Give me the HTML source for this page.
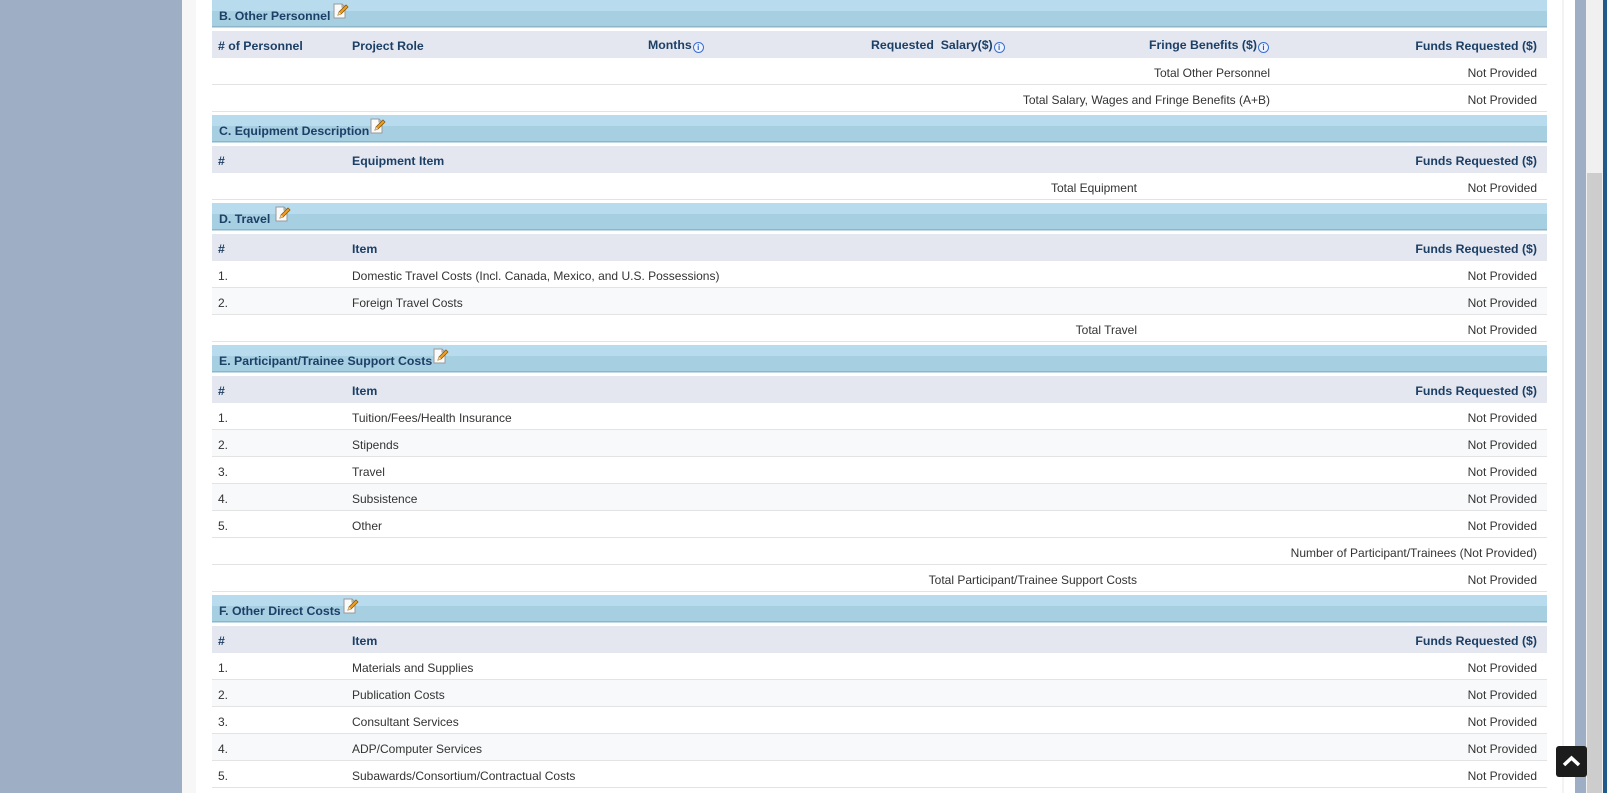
<!DOCTYPE html>
<html><head><meta charset="utf-8"><style>
*{margin:0;padding:0;box-sizing:border-box}
body{width:1607px;height:793px;overflow:hidden;background:#fff;font-family:"Liberation Sans",Arial,sans-serif;font-size:12px;color:#333;position:relative}
#lb{position:absolute;left:0;top:0;width:182px;height:793px;background:#9eaec4}
#lb2{position:absolute;left:182px;top:0;width:14px;height:793px;background:#f7f7f7}
#rl{position:absolute;left:1562px;top:0;width:2px;height:793px;background:#f3f3f3}
#rb{position:absolute;left:1575px;top:0;width:11px;height:793px;background:#9eaec4}
#sb{position:absolute;left:1586px;top:0;width:17px;height:793px;background:#f0f0f0}
#th{position:absolute;left:1587px;top:173px;width:15px;height:620px;background:#cdcdcd}
#dk{position:absolute;left:1603px;top:0;width:4px;height:793px;background:#1f5a8a}
#main{position:absolute;left:212px;top:0;width:1335px}
.sec{margin-bottom:3px}
.hd{height:28px;background:linear-gradient(#b8dcee 0,#b8dcee 11px,#a7cfe2 11px,#a7cfe2 26px,#8db5c8 26px,#8db5c8 27px,#c4dbe6 27px);position:relative;font-weight:bold;font-size:12.3px;color:#1c3f66;padding:9px 0 0 7px}
.hd svg{position:absolute;top:3px}
.ch{height:27px;margin-top:3px;background:#e4e7f0;position:relative;font-weight:bold;font-size:12.3px;color:#1c3f66}
.r{height:27px;position:relative;border-bottom:1px solid #e3e3e3}
.r.a{background:#f8f9fa}
.c{position:absolute;top:8px;white-space:nowrap}
.rt{text-align:right}
.info{display:inline-block;width:11px;height:11px;border:1px solid #3a6fd0;border-radius:50%;font-size:8px;line-height:9px;text-align:center;color:#2a5fc0;font-weight:bold;vertical-align:-1px;margin-left:1px;background:#eef3ff}
#up{position:absolute;left:1556px;top:746px;width:31px;height:31px;background:#1c1c1c;border-radius:3px}
</style></head><body>
<div id="lb"></div><div id="lb2"></div><div id="rl"></div><div id="rb"></div><div id="sb"></div><div id="th"></div><div id="dk"></div>
<svg width="0" height="0" style="position:absolute"><defs><g id="ed"><path d="M2 1h8l3 3v11H2z" fill="#fafafa" stroke="#999"/><path d="M10 1v3h3" fill="none" stroke="#999"/><path d="M6 12l1-3 7-7 2 2-7 7z" fill="#f0a020" stroke="#8a5a10" stroke-width=".8"/><path d="M6 12l1-3 2 2z" fill="#f3d9a0"/></g></defs></svg>
<div id="main">
<div class="sec"><div class="hd">B. Other Personnel<svg width="17" height="17" style="left:120px"><use href="#ed"/></svg></div>
<div class="ch"><span class="c" style="left:6px">#&nbsp;of Personnel</span><span class="c" style="left:140px">Project Role</span><span class="c" style="left:436px;top:7px">Months<span class="info">i</span></span><span class="c" style="left:659px;top:7px">Requested&nbsp; Salary($)<span class="info">i</span></span><span class="c" style="left:937px;top:7px">Fringe Benefits ($)<span class="info">i</span></span><span class="c rt" style="right:10px">Funds Requested ($)</span></div>
<div class="r"><span class="c rt" style="right:277px">Total Other Personnel</span><span class="c rt" style="right:10px">Not Provided</span></div>
<div class="r"><span class="c rt" style="right:277px">Total Salary, Wages and Fringe Benefits (A+B)</span><span class="c rt" style="right:10px">Not Provided</span></div></div>

<div class="sec"><div class="hd">C. Equipment Description<svg width="17" height="17" style="left:157px"><use href="#ed"/></svg></div>
<div class="ch"><span class="c" style="left:6px">#</span><span class="c" style="left:140px">Equipment Item</span><span class="c rt" style="right:10px">Funds Requested ($)</span></div>
<div class="r"><span class="c rt" style="right:410px">Total Equipment</span><span class="c rt" style="right:10px">Not Provided</span></div></div>

<div class="sec"><div class="hd">D. Travel<svg width="17" height="17" style="left:62px"><use href="#ed"/></svg></div>
<div class="ch"><span class="c" style="left:6px">#</span><span class="c" style="left:140px">Item</span><span class="c rt" style="right:10px">Funds Requested ($)</span></div>
<div class="r"><span class="c" style="left:6px">1.</span><span class="c" style="left:140px">Domestic Travel Costs (Incl. Canada, Mexico, and U.S. Possessions)</span><span class="c rt" style="right:10px">Not Provided</span></div>
<div class="r a"><span class="c" style="left:6px">2.</span><span class="c" style="left:140px">Foreign Travel Costs</span><span class="c rt" style="right:10px">Not Provided</span></div>
<div class="r"><span class="c rt" style="right:410px">Total Travel</span><span class="c rt" style="right:10px">Not Provided</span></div></div>

<div class="sec"><div class="hd">E. Participant/Trainee Support Costs<svg width="17" height="17" style="left:220px"><use href="#ed"/></svg></div>
<div class="ch"><span class="c" style="left:6px">#</span><span class="c" style="left:140px">Item</span><span class="c rt" style="right:10px">Funds Requested ($)</span></div>
<div class="r"><span class="c" style="left:6px">1.</span><span class="c" style="left:140px">Tuition/Fees/Health Insurance</span><span class="c rt" style="right:10px">Not Provided</span></div>
<div class="r a"><span class="c" style="left:6px">2.</span><span class="c" style="left:140px">Stipends</span><span class="c rt" style="right:10px">Not Provided</span></div>
<div class="r"><span class="c" style="left:6px">3.</span><span class="c" style="left:140px">Travel</span><span class="c rt" style="right:10px">Not Provided</span></div>
<div class="r a"><span class="c" style="left:6px">4.</span><span class="c" style="left:140px">Subsistence</span><span class="c rt" style="right:10px">Not Provided</span></div>
<div class="r"><span class="c" style="left:6px">5.</span><span class="c" style="left:140px">Other</span><span class="c rt" style="right:10px">Not Provided</span></div>
<div class="r"><span class="c rt" style="right:10px">Number of Participant/Trainees (Not Provided)</span></div>
<div class="r"><span class="c rt" style="right:410px">Total Participant/Trainee Support Costs</span><span class="c rt" style="right:10px">Not Provided</span></div></div>

<div class="sec"><div class="hd">F. Other Direct Costs<svg width="17" height="17" style="left:130px"><use href="#ed"/></svg></div>
<div class="ch"><span class="c" style="left:6px">#</span><span class="c" style="left:140px">Item</span><span class="c rt" style="right:10px">Funds Requested ($)</span></div>
<div class="r"><span class="c" style="left:6px">1.</span><span class="c" style="left:140px">Materials and Supplies</span><span class="c rt" style="right:10px">Not Provided</span></div>
<div class="r a"><span class="c" style="left:6px">2.</span><span class="c" style="left:140px">Publication Costs</span><span class="c rt" style="right:10px">Not Provided</span></div>
<div class="r"><span class="c" style="left:6px">3.</span><span class="c" style="left:140px">Consultant Services</span><span class="c rt" style="right:10px">Not Provided</span></div>
<div class="r a"><span class="c" style="left:6px">4.</span><span class="c" style="left:140px">ADP/Computer Services</span><span class="c rt" style="right:10px">Not Provided</span></div>
<div class="r"><span class="c" style="left:6px">5.</span><span class="c" style="left:140px">Subawards/Consortium/Contractual Costs</span><span class="c rt" style="right:10px">Not Provided</span></div>
</div>
</div>
<div id="up"><svg width="31" height="31"><path d="M8 19l7.5-7 7.5 7" fill="none" stroke="#fff" stroke-width="3.5"/></svg></div>
</body></html>
